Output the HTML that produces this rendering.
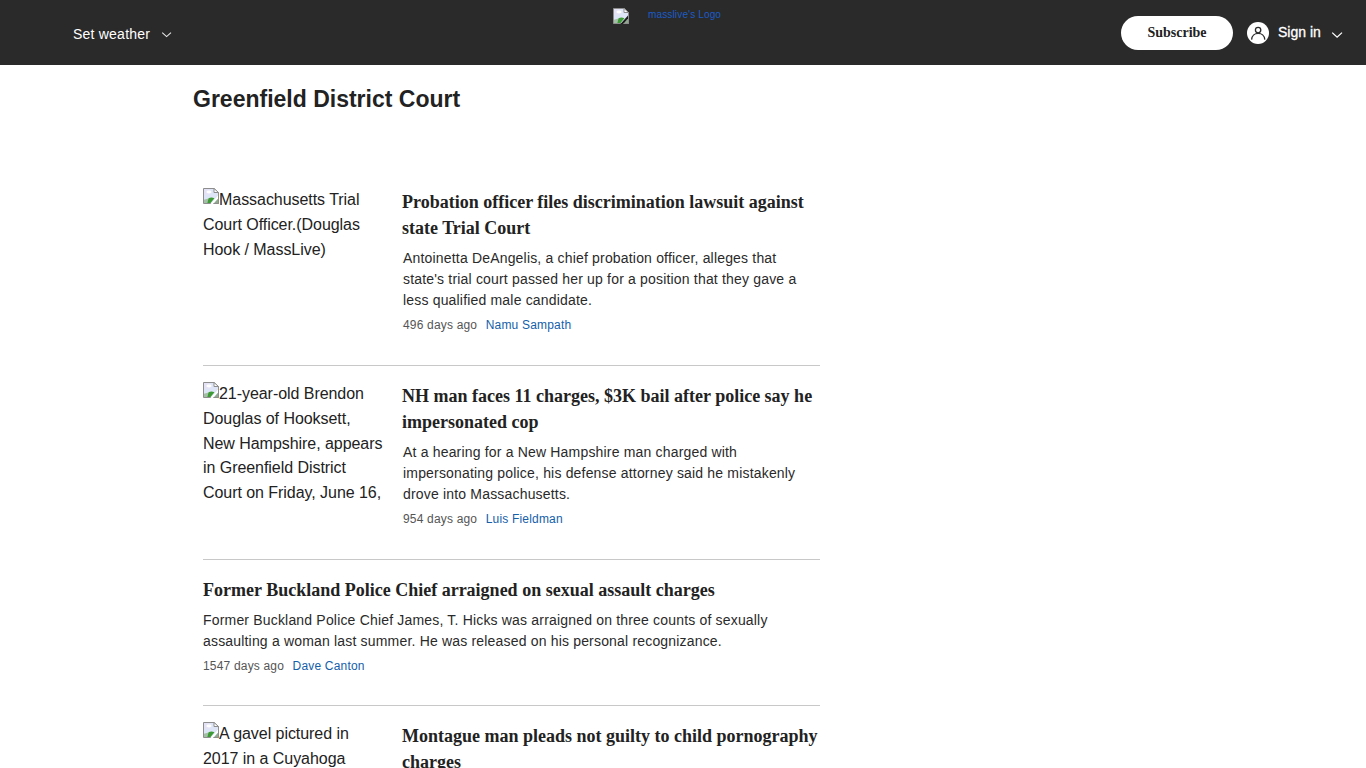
<!DOCTYPE html>
<html><head><meta charset="utf-8">
<style>
*{box-sizing:border-box;margin:0;padding:0}
html,body{width:1366px;height:768px;overflow:hidden;background:#fff;font-family:"Liberation Sans",sans-serif;color:#222}
.hdr{position:absolute;left:0;top:0;width:1366px;height:65px;background:#2a2a2a}
.sw{position:absolute;left:73px;top:26px;font-size:14px;letter-spacing:0.22px;color:#fff;line-height:17px;white-space:nowrap}
.chev{position:absolute}
.logo{position:absolute;left:648px;top:9px;font-size:10px;letter-spacing:0.15px;line-height:12px;color:#1a5cc8;white-space:nowrap}
.sub{position:absolute;left:1121px;top:16px;width:112px;height:34px;border-radius:17px;background:#fff;font-family:"Liberation Serif",serif;font-weight:bold;font-size:14px;color:#222;text-align:center;line-height:33px}
.ava{position:absolute;left:1247px;top:22px;width:22px;height:22px;border-radius:50%;background:#fff}
.si{position:absolute;left:1278px;top:24px;font-size:14px;-webkit-text-stroke:0.3px #fff;color:#fff;line-height:17px;white-space:nowrap}
h1{position:absolute;left:193px;top:85px;font-size:23px;line-height:28px;font-weight:bold;color:#222;white-space:nowrap}
.art{position:absolute;left:203px;width:617px}
.alt{position:absolute;left:0;top:1px;width:190px;height:121px;white-space:nowrap;font-size:16px;line-height:24.8px;color:#222;overflow:hidden;letter-spacing:-0.05px}
.bi{display:inline-block;vertical-align:1px}
.t{position:absolute;font-family:"Liberation Serif",serif;font-weight:bold;font-size:18px;line-height:26px;color:#222;white-space:nowrap}
.d{position:absolute;font-size:14px;line-height:21px;color:#2a2a2a;white-space:nowrap;letter-spacing:0.18px}
.m{position:absolute;font-size:12px;line-height:14px;color:#555;white-space:nowrap;letter-spacing:0.18px}
.m a{color:#1460aa;margin-left:5px}
.hr{position:absolute;left:203px;width:617px;height:1px;background:#c8c8c8}
</style></head><body>
<div class="hdr">
 <div class="sw">Set weather</div>
 <svg class="chev" style="left:161px;top:31px" width="12" height="8" viewBox="0 0 12 8"><path d="M1.2 1.6 L5.6 5.6 L10 1.6" fill="none" stroke="#e8e8e8" stroke-width="1.1"/></svg>
 <div style="position:absolute;left:613px;top:8px"><svg width="16" height="16" viewBox="0 0 16 16"><path d="M0.5 0.5 H11 L15.5 4.5 V15.5 H0.5 Z" fill="#dde5f6" stroke="#8d8d8d" stroke-width="1"/><path d="M1 1 H7 V7 H1 Z" fill="#e6e2f6" opacity="0.8"/><path d="M11 0.5 V4.5 H15.5 Z" fill="#fff" stroke="#8d8d8d" stroke-width="1" stroke-linejoin="round"/><ellipse cx="6" cy="4" rx="2.6" ry="1.4" fill="#fff"/><path d="M1 15 V11.8 L5.6 10.4 L4.2 15 Z" fill="#a3bfa6"/><path d="M4.2 15 L5.6 10.3 Q8.2 8.8 11.4 10.2 L7.6 15 Z" fill="#3d9a34"/><path d="M10.6 15 L15 10.6 V15 Z" fill="#90a890"/><path d="M7.4 16 L15 7.6 V10.4 L10.2 16 Z" fill="#1c1c1c"/><path d="M10.5 15.5 H15.5 V10" fill="none" stroke="#8d8d8d" stroke-width="1"/></svg></div><div class="logo">masslive's Logo</div>
 <div class="sub">Subscribe</div>
 <div class="ava"><svg width="22" height="22" viewBox="0 0 22 22"><circle cx="11.1" cy="8.1" r="2.7" fill="none" stroke="#2b2b2b" stroke-width="1.3"/><path d="M4.6 17.6 C5 9.2 17.4 9.2 17.8 17.6" fill="none" stroke="#2b2b2b" stroke-width="1.3"/></svg></div>
 <div class="si">Sign in</div>
 <svg class="chev" style="left:1331px;top:31px" width="13" height="9" viewBox="0 0 13 9"><path d="M1.2 1.6 L6.1 6.2 L11 1.6" fill="none" stroke="#fff" stroke-width="1.3"/></svg>
</div>
<h1>Greenfield District Court</h1>

<div class="art" style="top:187px">
 <div class="alt"><svg class="bi" width="16" height="16" viewBox="0 0 16 16"><path d="M0.5 0.5 H11 L15.5 4.5 V15.5 H0.5 Z" fill="#dde5f6" stroke="#8d8d8d" stroke-width="1"/><path d="M1 1 H7 V7 H1 Z" fill="#e6e2f6" opacity="0.8"/><path d="M11 0.5 V4.5 H15.5 Z" fill="#fff" stroke="#8d8d8d" stroke-width="1" stroke-linejoin="round"/><ellipse cx="6" cy="4" rx="2.6" ry="1.4" fill="#fff"/><path d="M1 15 V11.8 L5.6 10.4 L4.2 15 Z" fill="#a3bfa6"/><path d="M4.2 15 L5.6 10.3 Q8.2 8.8 11.4 10.2 L7.6 15 Z" fill="#3d9a34"/><path d="M10.6 15 L15 10.6 V15 Z" fill="#90a890"/><path d="M7.4 16 L15 7.6 V10.4 L10.2 16 Z" fill="#fff"/><path d="M10.5 15.5 H15.5 V10" fill="none" stroke="#8d8d8d" stroke-width="1"/></svg>Massachusetts Trial<br>Court Officer.(Douglas<br>Hook / MassLive)</div>
 <div class="t" style="left:199px;top:2px">Probation officer files discrimination lawsuit against<br>state Trial Court</div>
 <div class="d" style="left:200px;top:61px">Antoinetta DeAngelis, a chief probation officer, alleges that<br>state's trial court passed her up for a position that they gave a<br>less qualified male candidate.</div>
 <div class="m" style="left:200px;top:131px">496 days ago <a>Namu Sampath</a></div>
</div>
<div class="hr" style="top:365px"></div>

<div class="art" style="top:381px">
 <div class="alt"><svg class="bi" width="16" height="16" viewBox="0 0 16 16"><path d="M0.5 0.5 H11 L15.5 4.5 V15.5 H0.5 Z" fill="#dde5f6" stroke="#8d8d8d" stroke-width="1"/><path d="M1 1 H7 V7 H1 Z" fill="#e6e2f6" opacity="0.8"/><path d="M11 0.5 V4.5 H15.5 Z" fill="#fff" stroke="#8d8d8d" stroke-width="1" stroke-linejoin="round"/><ellipse cx="6" cy="4" rx="2.6" ry="1.4" fill="#fff"/><path d="M1 15 V11.8 L5.6 10.4 L4.2 15 Z" fill="#a3bfa6"/><path d="M4.2 15 L5.6 10.3 Q8.2 8.8 11.4 10.2 L7.6 15 Z" fill="#3d9a34"/><path d="M10.6 15 L15 10.6 V15 Z" fill="#90a890"/><path d="M7.4 16 L15 7.6 V10.4 L10.2 16 Z" fill="#fff"/><path d="M10.5 15.5 H15.5 V10" fill="none" stroke="#8d8d8d" stroke-width="1"/></svg>21-year-old Brendon<br>Douglas of Hooksett,<br>New Hampshire, appears<br>in Greenfield District<br>Court on Friday, June 16,</div>
 <div class="t" style="left:199px;top:2px">NH man faces 11 charges, $3K bail after police say he<br>impersonated cop</div>
 <div class="d" style="left:200px;top:61px">At a hearing for a New Hampshire man charged with<br>impersonating police, his defense attorney said he mistakenly<br>drove into Massachusetts.</div>
 <div class="m" style="left:200px;top:131px">954 days ago <a>Luis Fieldman</a></div>
</div>
<div class="hr" style="top:559px"></div>

<div class="art" style="top:575px">
 <div class="t" style="left:0;top:2px">Former Buckland Police Chief arraigned on sexual assault charges</div>
 <div class="d" style="left:0;top:35px">Former Buckland Police Chief James, T. Hicks was arraigned on three counts of sexually<br>assaulting a woman last summer. He was released on his personal recognizance.</div>
 <div class="m" style="left:0;top:84px">1547 days ago <a>Dave Canton</a></div>
</div>
<div class="hr" style="top:705px"></div>

<div class="art" style="top:721px">
 <div class="alt"><svg class="bi" width="16" height="16" viewBox="0 0 16 16"><path d="M0.5 0.5 H11 L15.5 4.5 V15.5 H0.5 Z" fill="#dde5f6" stroke="#8d8d8d" stroke-width="1"/><path d="M1 1 H7 V7 H1 Z" fill="#e6e2f6" opacity="0.8"/><path d="M11 0.5 V4.5 H15.5 Z" fill="#fff" stroke="#8d8d8d" stroke-width="1" stroke-linejoin="round"/><ellipse cx="6" cy="4" rx="2.6" ry="1.4" fill="#fff"/><path d="M1 15 V11.8 L5.6 10.4 L4.2 15 Z" fill="#a3bfa6"/><path d="M4.2 15 L5.6 10.3 Q8.2 8.8 11.4 10.2 L7.6 15 Z" fill="#3d9a34"/><path d="M10.6 15 L15 10.6 V15 Z" fill="#90a890"/><path d="M7.4 16 L15 7.6 V10.4 L10.2 16 Z" fill="#fff"/><path d="M10.5 15.5 H15.5 V10" fill="none" stroke="#8d8d8d" stroke-width="1"/></svg>A gavel pictured in<br>2017 in a Cuyahoga<br>County courtroom</div>
 <div class="t" style="left:199px;top:2px">Montague man pleads not guilty to child pornography<br>charges</div>
</div>
</body></html>
